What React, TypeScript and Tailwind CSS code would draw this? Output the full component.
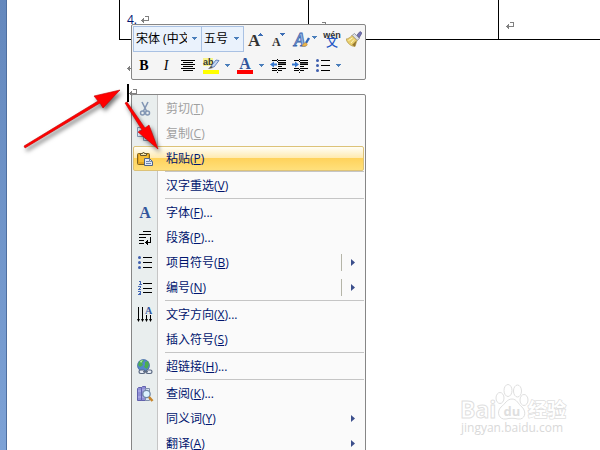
import type { ReactNode } from "react";
import { clsx } from "clsx";

interface MenuItem {
  label: string;
  accel: string;
  more?: boolean;
  icon?: ReactNode;
  disabled?: boolean;
  active?: boolean;
  split?: boolean;
  submenu?: boolean;
}

// each inner list is a section, sections are divided by a line
const sections: MenuItem[][] = [
  [
    { label: "剪切", accel: "T", icon: <ScissorsIcon />, disabled: true },
    { label: "复制", accel: "C", icon: <CopyIcon />, disabled: true },
    { label: "粘贴", accel: "P", icon: <PasteIcon />, active: true },
  ],
  [{ label: "汉字重选", accel: "V" }],
  [
    { label: "字体", accel: "F", more: true, icon: <FontIcon /> },
    { label: "段落", accel: "P", more: true, icon: <ParagraphIcon /> },
    { label: "项目符号", accel: "B", icon: <BulletsIcon />, split: true, submenu: true },
    { label: "编号", accel: "N", icon: <NumberingIcon />, split: true, submenu: true },
  ],
  [
    { label: "文字方向", accel: "X", more: true, icon: <DirectionIcon /> },
    { label: "插入符号", accel: "S" },
  ],
  [{ label: "超链接", accel: "H", more: true, icon: <LinkIcon /> }],
  [
    { label: "查阅", accel: "K", more: true, icon: <ResearchIcon /> },
    { label: "同义词", accel: "Y", submenu: true },
    { label: "翻译", accel: "A", submenu: true },
  ],
];

export default function App() {
  return (
    <div className="relative flex h-screen overflow-hidden bg-white font-['Open_Sans','Noto_Sans_CJK_SC',sans-serif] text-xs text-[#00156e]">
      <div className="w-[7px] shrink-0 border-r border-[#4f6f9f] bg-linear-to-b from-[#6488bd] to-[#7da2d6]" />
      <Document />
      <MiniToolbar />
      <ContextMenu />
      <Watermark />
      <Arrows />
    </div>
  );
}

function Document() {
  return (
    <main className="min-w-0 grow">
      <div className="pl-28">
        <table className="h-10 w-full table-fixed border-collapse">
          <tbody>
            <tr className="border-b border-black">
              <td className="w-[189px] border-l border-black pl-[7px] align-middle">
                <span className="flex items-center gap-1">
                  4. <ReturnMark />
                </span>
              </td>
              <td className="w-[190px] border-l border-black pl-[9px] pt-3">
                <ReturnMark />
              </td>
              <td className="border-l border-black pl-[7px] pt-3">
                <ReturnMark />
              </td>
            </tr>
          </tbody>
        </table>
        <p className="mt-4 flex h-6 items-center pl-2">
          <ReturnMark />
        </p>
        <p className="mt-[3px] flex h-5 items-center pl-2">
          <span className="h-[18px] w-0.5 bg-black" />
          <ReturnMark />
        </p>
      </div>
    </main>
  );
}

function ReturnMark() {
  return (
    <svg className="block h-2 w-2 shrink-0" viewBox="0 0 8 8" fill="none" stroke="#808080" shapeRendering="crispEdges">
      <path d="M4 .5h3v4M0 4.500h7M1.500 3v3M2.500 2v5" />
    </svg>
  );
}

function MiniToolbar() {
  return (
    <div
      role="toolbar"
      aria-label="格式"
      className="absolute left-[131px] top-6 flex w-[235px] flex-col rounded-xs border border-[#868686] bg-[#f5f5f5] p-px pb-0"
    >
      <div className="flex h-[26px] items-center">
        <ToolSelect label="字体名称" value="宋体 (中文正文)" className="w-[69px]" />
        <ToolSelect label="字号" value="五号" className="-ml-px w-[43px]" />
        <ToolButton label="增大字体" className="w-6"><GrowIcon /></ToolButton>
        <ToolButton label="缩小字体" className="w-6"><ShrinkIcon /></ToolButton>
        <ToolButton label="样式" className="w-7"><StyleIcon /></ToolButton>
        <ToolButton label="拼音指南" className="w-6"><PinyinIcon /></ToolButton>
        <ToolButton label="格式刷" className="w-5"><BrushIcon /></ToolButton>
      </div>
      <div className="flex h-[27px] items-center">
        <ToolButton label="加粗" className="w-[22px]">
          <span className="font-['Liberation_Serif',serif] text-sm font-black text-black">B</span>
        </ToolButton>
        <ToolButton label="倾斜" className="w-[22px]">
          <span className="font-['Liberation_Serif',serif] text-sm italic text-black">I</span>
        </ToolButton>
        <ToolButton label="居中" className="w-[22px]"><CenterIcon /></ToolButton>
        <ToolButton label="突出显示" className="w-[34px]"><HighlightIcon /><DownArrow /></ToolButton>
        <ToolButton label="字体颜色" className="w-[34px]"><FontColorIcon /><DownArrow /></ToolButton>
        <ToolButton label="减少缩进" className="w-[22px]"><IndentIcon flip /></ToolButton>
        <ToolButton label="增加缩进" className="w-[22px]"><IndentIcon /></ToolButton>
        <ToolButton label="项目符号" className="w-[34px]"><BulletsIcon /><DownArrow /></ToolButton>
      </div>
    </div>
  );
}

function ToolSelect({ label, value, className }: { label: string; value: string; className: string }) {
  return (
    <div className={clsx("relative shrink-0", className)}>
      <select
        aria-label={label}
        className="block h-[26px] w-full appearance-none overflow-hidden border border-[#a9c1e3] bg-[#eaf2fc] pl-[2px] pr-[14px] text-xs text-black outline-none"
      >
        <option>{value}</option>
      </select>
      <span className="pointer-events-none absolute right-[5px] top-[11px]">
        <DownArrow />
      </span>
    </div>
  );
}

function ToolButton({ label, className, children }: { label: string; className: string; children: ReactNode }) {
  return (
    <button type="button" aria-label={label} className={clsx("flex h-6 shrink-0 items-center justify-center gap-1.5", className)}>
      {children}
    </button>
  );
}

function DownArrow() {
  return (
    <svg className="block h-[3px] w-[5px] shrink-0" viewBox="0 0 5 3" fill="#4a7ebb" shapeRendering="crispEdges">
      <path d="M0 0h5v1H0zM1 1h3v1H1zM2 2h1v1H2z" />
    </svg>
  );
}

function ContextMenu() {
  return (
    <div
      role="menu"
      className="absolute left-[131px] top-[94px] w-[235px] rounded-xs border border-[#868686] bg-[linear-gradient(to_right,#e9eeee_25px,#c5c5c5_25px,#c5c5c5_26px,#fafafa_26px)] p-px"
    >
      {sections.map((items, i) => (
        <div key={i}>
          {i > 0 && (
            <div role="separator" className="ml-8 h-0.5 border-t border-[#c5c5c5]" />
          )}
          {items.map((item) => (
            <MenuRow key={item.label} item={item} />
          ))}
        </div>
      ))}
    </div>
  );
}

function MenuRow({ item }: { item: MenuItem }) {
  return (
    <button
      type="button"
      role="menuitem"
      disabled={item.disabled}
      className={clsx(
        "flex h-[25px] w-full items-center rounded-xs border text-left",
        item.disabled && "text-[#a0a0a0]",
        item.active
          ? "border-[#dcc278] bg-[linear-gradient(#fffef6,#ffeaae_48%,#ffd25a_48%,#ffe07c)]"
          : "border-transparent"
      )}
    >
      <span className="flex w-[22px] shrink-0 items-center justify-center">{item.icon}</span>
      <span className="grow pl-2.5">
        {item.label}(<u className="underline-offset-1">{item.accel}</u>){item.more && "..."}
      </span>
      {item.split && <span className="mr-[9px] h-[17px] w-px bg-[#b5b5a8]" />}
      {item.submenu && (
        <svg className="mr-2 h-[7px] w-1" viewBox="0 0 4 7" fill="#3c4f8c">
          <path d="M0 0L4 3.500L0 7z" />
        </svg>
      )}
    </button>
  );
}

/* toolbar icons */

function GrowIcon() {
  return (
    <svg className="size-[18px] overflow-visible" viewBox="0 0 18 18">
      <text x="1" y="16" fontFamily="Liberation Serif, serif" fontSize="17" fontWeight="bold" fill="#333">A</text>
      <path d="M11 6h5v-1h-1V4h-1V3h-1v1h-1v1h-1z" fill="#3d6eb5" />
    </svg>
  );
}

function ShrinkIcon() {
  return (
    <svg className="size-[18px] overflow-visible" viewBox="0 0 18 18">
      <text x="1" y="16" fontFamily="Liberation Serif, serif" fontSize="12" fontWeight="bold" fill="#333">A</text>
      <path d="M9 3h5v1h-1v1h-1v1h-1V5h-1V4H9z" fill="#3d6eb5" />
    </svg>
  );
}

function StyleIcon() {
  return (
    <svg className="h-[18px] w-6 shrink-0 overflow-visible" viewBox="0 0 24 18">
      <text x="0" y="16" fontFamily="Liberation Serif, serif" fontSize="18" fontWeight="bold" fontStyle="italic" fill="#8fb0e0" stroke="#3d67ae" strokeWidth=".8">A</text>
      <path d="M15 8l-3 5" stroke="#2f65b8" strokeWidth="2.400" />
      <path d="M8 16c1-1 2-4 4-3s2 4-4 3" fill="#efb84c" stroke="#bc8131" strokeWidth=".6" />
      <path d="M18 6h5v1h-1v1h-1v1h-1V8h-1V7h-1z" fill="#4a7ebb" />
    </svg>
  );
}

function PinyinIcon() {
  return (
    <svg className="h-5 w-[18px] overflow-visible" viewBox="0 0 18 20">
      <text x="9" y="9" textAnchor="middle" fontFamily="Liberation Sans, sans-serif" fontSize="9" fontWeight="bold" fill="#333">wén</text>
      <text x="9" y="18" textAnchor="middle" fontFamily="Noto Sans CJK SC, sans-serif" fontSize="12" fontWeight="500" fill="#2557c5">文</text>
    </svg>
  );
}

function BrushIcon() {
  return (
    <svg className="size-4" viewBox="0 0 16 16">
      <path d="M11 4l3-3.500L16 2l-3 5z" fill="#7374b5" stroke="#454278" strokeWidth=".6" />
      <path d="M8.500 2.500l5 5-2.500 2-5-5z" fill="#dce0e8" stroke="#777b87" strokeWidth=".7" />
      <path d="M6 4.500l5 5-2 6C5 15.500 1 12 0 8c2 0 4-1.500 6-3.500z" fill="#e9cf6e" stroke="#a68a3a" strokeWidth=".6" />
      <path d="M6.500 7L2.500 9.500M8 8.500L5 12" stroke="#fff7c4" />
      <path d="M10.500 9.500l-1.500 6-3-1.500z" fill="#94762f" />
    </svg>
  );
}

function CenterIcon() {
  return (
    <svg className="h-3 w-[14px]" viewBox="0 0 14 12" stroke="#000" shapeRendering="crispEdges">
      <path d="M0 .5h14M2 2.500h10M0 4.500h14M2 6.500h10M0 8.500h14M2 10.500h10" />
    </svg>
  );
}

function HighlightIcon() {
  return (
    <svg className="size-4 overflow-visible" viewBox="0 0 16 16">
      <path d="M0 0h10v8H0z" fill="#f8f38b" />
      <text x="0" y="7" fontFamily="Liberation Sans, sans-serif" fontSize="9" fontWeight="bold" fill="#333">ab</text>
      <path d="M8 9l1-2 4-5 3 .5L11 9z" fill="#c8d8f2" stroke="#456caf" strokeWidth=".8" />
      <path d="M5 11l3-3 2 2z" fill="#555" />
      <path d="M0 12h16v4H0z" fill="#ff0" />
    </svg>
  );
}

function FontColorIcon() {
  return (
    <svg className="size-4 overflow-visible" viewBox="0 0 16 16">
      <text x="8" y="11" textAnchor="middle" fontFamily="Liberation Serif, serif" fontSize="16" fontWeight="bold" fill="#32569c">A</text>
      <path d="M0 12h16v4H0z" fill="red" />
    </svg>
  );
}

function IndentIcon({ flip }: { flip?: boolean }) {
  return (
    <svg className="h-[14px] w-4" viewBox="0 0 16 14">
      <g stroke="#000" shapeRendering="crispEdges">
        <path d="M2 1.500h5M8 1.500h8M8 3.500h8M8 5.500h8M8 7.500h4M2 9.500h5M8 9.500h8M2 11.500h5M8 11.500h4" />
        <path d="M8 4.500h8" strokeOpacity=".6" />
        <path d="M7.500 0v1M7.500 2v1M7.500 10v1M7.500 13v1" />
      </g>
      <path d={flip ? "M4 2.500L0 5.500l4 3v-2h3v-2H4z" : "M3 2.500l4 3-4 3v-2H0v-2h3z"} fill="#3476ce" />
    </svg>
  );
}

/* icons shared by the toolbar and the menu */

function BulletsIcon() {
  return (
    <svg className="h-[13px] w-[14px] shrink-0" viewBox="0 0 14 13">
      <path d="M5 1.500h9M5 6.500h9M5 11.500h9" stroke="#000" shapeRendering="crispEdges" />
      <g fill="#3f5fae">
        <circle cx="1.500" cy="1.500" r="1.500" />
        <circle cx="1.500" cy="6.500" r="1.500" />
        <circle cx="1.500" cy="11.500" r="1.500" />
      </g>
    </svg>
  );
}

/* menu icons */

function ScissorsIcon() {
  return (
    <svg className="size-4" viewBox="0 0 16 16" fill="none" stroke="#8296b4">
      <path d="M5 1l4.500 9M11 1l-4.500 9" strokeWidth="1.600" />
      <circle cx="5.500" cy="12" r="2" strokeWidth="1.500" />
      <circle cx="10.500" cy="12" r="2" strokeWidth="1.500" />
    </svg>
  );
}

function CopyIcon() {
  return (
    <svg className="size-4" viewBox="0 0 16 16" fill="#e3eaf5" stroke="#8799b5">
      <path d="M.5 1.500h6l2 2v7h-8z" />
      <path d="M2 4.500h4M2 6.500h4" />
      <path d="M6.500 5.500h6l2 2v7h-8z" />
      <path d="M8 8.500h4M8 10.500h5M8 12.500h5" />
    </svg>
  );
}

function PasteIcon() {
  return (
    <svg className="size-4" viewBox="0 0 16 16">
      <rect x=".5" y="2.500" width="12" height="11" rx="1" fill="#e2a41f" stroke="#80621c" />
      <path d="M2 4h9v7H2z" fill="#f5bd35" />
      <path d="M3.500 4.500v-2h2L6.500 1l1 1.500h2v2z" fill="#f3e3a9" stroke="#62542f" />
      <path d="M7.500 7.500h5l3 3v4h-8z" fill="#dfe9fb" stroke="#506587" />
      <path d="M9 10.500h3M9 12.500h5M12.500 8v2.500H15" stroke="#6f87ae" fill="none" />
    </svg>
  );
}

function FontIcon() {
  return (
    <svg className="size-4" viewBox="0 0 16 16">
      <text x="8" y="13" textAnchor="middle" fontFamily="Liberation Serif, serif" fontSize="16" fontWeight="bold" fill="#32569c">A</text>
    </svg>
  );
}

function ParagraphIcon() {
  return (
    <svg className="h-[14px] w-3" viewBox="0 0 12 14" fill="none" stroke="#000" shapeRendering="crispEdges">
      <path d="M4 .5h8M0 3.500h12M0 6.500h7M0 9.500h5M0 12.500h5M11.500 6v5.500H7" />
      <path d="M6 11.500L9 9v5z" fill="#000" stroke="none" />
    </svg>
  );
}

function NumberingIcon() {
  return (
    <svg className="h-[14px] w-[14px]" viewBox="0 0 14 14" shapeRendering="crispEdges">
      <path d="M5 2.500h9M5 7.500h9M5 11.500h9" stroke="#000" />
      <path d="M1 .5h1.500v3M1 3.500h3M0 5.500h2.500v1L.5 8.500H3M0 10.500h2.500v3H0M1 12h2" fill="none" stroke="#4467b5" />
    </svg>
  );
}

function DirectionIcon() {
  return (
    <svg className="size-4 overflow-visible" viewBox="0 0 16 16">
      <path d="M1.500 0v13M5.500 0v13M9.500 8v5M13.500 8v5" stroke="#000" shapeRendering="crispEdges" />
      <path d="M0 12h3l-1.500 3zM4 12h3l-1.500 3zM8 12h3l-1.500 3zM12 12h3l-1.500 3z" />
      <text x="8" y="7" fontFamily="Liberation Serif, serif" fontSize="10" fontWeight="bold" fill="#32569c">A</text>
    </svg>
  );
}

function LinkIcon() {
  return (
    <svg className="size-4" viewBox="0 0 16 16">
      <circle cx="6.500" cy="6.500" r="6" fill="#5387ca" stroke="#3b629d" strokeWidth=".7" />
      <path d="M2 3c2-3 5-2 5-1L5 4l1 2-3 2-2-2zM8 3l3-1 1 4-2 4-3-2 1-2z" fill="#4cae50" />
      <path d="M3 2l3-1-2 3z" fill="#b9edac" />
      <g fill="none" stroke="#5a6982" strokeWidth="1.200">
        <rect x="2" y="11" width="6" height="3.500" rx="1.700" fill="#e8edf5" />
        <rect x="9" y="11" width="6" height="3.500" rx="1.700" fill="#e8edf5" />
        <path d="M6 12.700h5" />
      </g>
    </svg>
  );
}

function ResearchIcon() {
  return (
    <svg className="size-4 overflow-visible" viewBox="0 0 16 16">
      <path d="M.5 2.500l1-1h3v13h-4zM4.500 1.500l1-1h3v14h-4z" fill="#8f8fd6" stroke="#6262ad" />
      <path d="M8.500 2.500h4v12h-4z" fill="#dce5f3" stroke="#8191ac" />
      <path d="M1 5h3M1 11h3M5 4h3M5 11h3" stroke="#bab9ef" />
      <circle cx="9.500" cy="8" r="3.700" fill="#dcf2ff" stroke="#7188a6" strokeWidth="1.300" />
      <path d="M12 11l3.500 4" stroke="#c6852b" strokeWidth="2.500" />
    </svg>
  );
}

/* overlays */

function Watermark() {
  return (
    <svg className="pointer-events-none absolute bottom-3 right-7 h-[54px] w-28" viewBox="0 0 112 54" fill="#fff" stroke="#dfdfdf">
      <g fontFamily="Open Sans, Noto Sans CJK SC, sans-serif">
        <text x="0" y="34" fontSize="23" fontWeight="bold">Bai</text>
        <text x="68" y="33" fontSize="19" fontWeight="bold" strokeWidth="1.500" paintOrder="stroke">经验</text>
        <text x="1" y="48" fontSize="12" fill="#d9d9d9" stroke="none">jingyan.baidu.com</text>
      </g>
      <ellipse cx="40" cy="14" rx="4" ry="5.500" />
      <ellipse cx="48" cy="6.500" rx="4" ry="6" />
      <ellipse cx="57.500" cy="7" rx="4" ry="6" />
      <ellipse cx="64" cy="16" rx="4" ry="5.500" />
      <path d="M52 15c5 0 6 5 10 8 5 5 3 13-4 12-4-1-8-1-12 0-7 1-10-7-5-12 4-3 6-8 11-8z" />
      <text x="52" y="32" textAnchor="middle" fontFamily="Open Sans, sans-serif" fontSize="13" fontWeight="bold" fill="#dfdfdf" stroke="none">du</text>
    </svg>
  );
}

function Arrows() {
  return (
    <svg
      className="pointer-events-none absolute left-0 top-20 h-20 w-44 drop-shadow-[2px_3px_2px_rgba(0,0,0,0.55)]"
      viewBox="0 80 176 80"
      fill="#f00"
      stroke="#c40000"
      strokeWidth=".6"
    >
      <path d="M24 146l74-45-4-5 26-6-17 18-3-5-75 45z" />
      <path d="M127 102l18 26 4-3 9 24-20-17 4-2-17-27z" />
    </svg>
  );
}
